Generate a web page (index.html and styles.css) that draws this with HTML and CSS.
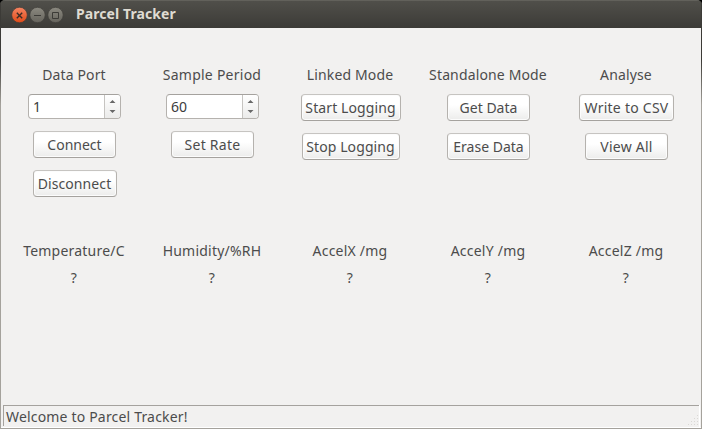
FILE: index.html
```html
<!DOCTYPE html>
<html lang="en">
<head>
<meta charset="utf-8">
<title>Parcel Tracker</title>
<link rel="stylesheet" href="styles.css">
</head>
<body>
<div class="window">
  <header class="titlebar">
    <svg class="controls" width="54" height="18" viewBox="0 0 54 18">
      <defs>
        <linearGradient id="close" x1="0" y1="0" x2="0" y2="1"><stop offset="0" stop-color="#f58563"/><stop offset="1" stop-color="#df4a17"/></linearGradient>
        <linearGradient id="plain" x1="0" y1="0" x2="0" y2="1"><stop offset="0" stop-color="#8b8980"/><stop offset="1" stop-color="#65635c"/></linearGradient>
      </defs>
      <g stroke="#3f3e39" stroke-width=".7">
        <circle cx="8.5" cy="9" r="7.8" fill="url(#close)"/>
        <circle cx="26.5" cy="9" r="7.7" fill="url(#plain)"/>
        <circle cx="44.5" cy="9" r="7.7" fill="url(#plain)"/>
      </g>
      <g fill="none" stroke="#3b2c25" stroke-width="1.4">
        <path d="M5.8 6.8l5.4 5.4M11.2 6.8l-5.4 5.4"/>
        <path d="M23 9.5h7M41.5 6.5h6v6h-6z" stroke="#3c3b37" stroke-width="1"/>
      </g>
    </svg>
    <h1>Parcel Tracker</h1>
  </header>
  <main>
    <div class="columns controls-grid">
      <section><h2>Data Port</h2>
        <div class="spin"><span>1</span><i><svg width="15" height="23"><path d="M4.5 8L7.5 5l3 3zM4.5 15h6l-3 3z"/></svg></i></div>
        <button>Connect</button><button class="tight">Disconnect</button></section>
      <section><h2 class="period">Sample Period</h2>
        <div class="spin"><span>60</span><i><svg width="15" height="23"><path d="M4.5 8L7.5 5l3 3zM4.5 15h6l-3 3z"/></svg></i></div>
        <button class="loose">Set Rate</button></section>
      <section><h2>Linked Mode</h2>
        <button class="wide-start">Start Logging</button><button class="wide-stop">Stop Logging</button></section>
      <section><h2>Standalone Mode</h2>
        <button>Get Data</button><button>Erase Data</button></section>
      <section><h2>Analyse</h2>
        <button class="wide-csv">Write to CSV</button><button class="loose">View All</button></section>
    </div>
    <div class="columns readings">
      <div><span>Temperature/C</span><span>?</span></div>
      <div><span>Humidity/%RH</span><span>?</span></div>
      <div><span>AccelX /mg</span><span>?</span></div>
      <div><span>AccelY /mg</span><span>?</span></div>
      <div><span>AccelZ /mg</span><span>?</span></div>
    </div>
  </main>
  <footer><span>Welcome to Parcel Tracker!</span>
    <svg width="12" height="12" fill="#dad8d5"><path d="M9 0h1v1H9zM6 3h1v1H6zM9 3h1v1H9zM3 6h1v1H3zM6 6h1v1H6zM9 6h1v1H9zM0 9h1v1H0zM3 9h1v1H3zM6 9h1v1H6zM9 9h1v1H9z"/></svg>
  </footer>
</div>
</body>
</html>
```
FILE: styles.css
```css
* { box-sizing: border-box; }
body { margin: 0; background: #000; color: #4c4c4c; font: 14px/20px "Noto Sans", sans-serif; white-space: nowrap; }
.window { width: 702px; height: 429px; display: flex; flex-direction: column; overflow: hidden; border-radius: 5px 5px 0 0; background: linear-gradient(#3c3b37 60px, #a5a29c 105px); }
.titlebar { height: 28px; flex: none; display: flex; align-items: center; padding-left: 11px; background: linear-gradient(#504f4a, #3c3b37); border-top: 1px solid #62615b; box-shadow: inset 1px 0 #3c3b37, inset -1px 0 #3c3b37; }
.controls { margin-right: 11px; }
h1 { margin: -2px 0 0; font-size: 14px; line-height: 20px; font-weight: 700; color: #dfdbd2; letter-spacing: 0.08px; }
main { margin: 0 1px; flex: 1; background: #f2f1f0; padding: 37px 5px 0 4px; }
.columns { display: grid; grid-template-columns: repeat(5, 138px); }
.controls-grid { height: 176px; }
section { display: flex; flex-direction: column; align-items: center; gap: 12px; padding-left: 1px; }
h2 { margin: 0 1px -3px 0; font-size: 14px; line-height: 20px; font-weight: 400; letter-spacing: 0.14px; }
.period { letter-spacing: 0.25px; }
button { font: inherit; color: inherit; height: 27px; width: 83px; padding: 0; border: 1px solid #b5b2ae; border-top-color: #c6c4c1; border-bottom-color: #a5a29e; border-radius: 4px; background: linear-gradient(#fff 40%, #ececeb); box-shadow: inset 0 0 0 1px #fcfcfc; }
.tight { width: 84px; letter-spacing: 0.1px; }
.loose { letter-spacing: 0.25px; }
.spin { width: 93px; height: 25px; display: flex; border: 1px solid #b5b2ae; border-top-color: #a5a29e; border-radius: 4px; background: #fff; overflow: hidden; color: #3c3c3c; }
.spin span { flex: 1; padding: 2px 0 0 4px; }
.spin i { width: 16px; border-left: 1px solid #c6c4c1; background: linear-gradient(#fff, #ebebea); }
svg { display: block; }
.spin svg { fill: #686868; }
.readings div { display: flex; flex-direction: column; align-items: center; gap: 7px; letter-spacing: 0.22px; }
.wide-start { width: 100px; letter-spacing: 0.1px; }
.wide-stop { width: 98px; letter-spacing: 0.1px; }
.wide-csv { width: 95px; letter-spacing: 0.25px; }
footer { height: 23px; flex: none; margin: 0 1px 1px; padding: 0 1px 1px 2px; display: flex; justify-content: space-between; align-items: flex-end; box-shadow: inset 0 -1px #fff; letter-spacing: 0.18px; }
footer { background: linear-gradient(#a5a29e, #a5a29e) 2px 0 / 696px 1px no-repeat, linear-gradient(#a5a29e, #a5a29e) 2px 0 / 1px 21px no-repeat, linear-gradient(#fff, #fff) 698px 0 / 1px 22px no-repeat, #f2f1f0; }
footer span { padding: 0 0 0 3px; }
```
